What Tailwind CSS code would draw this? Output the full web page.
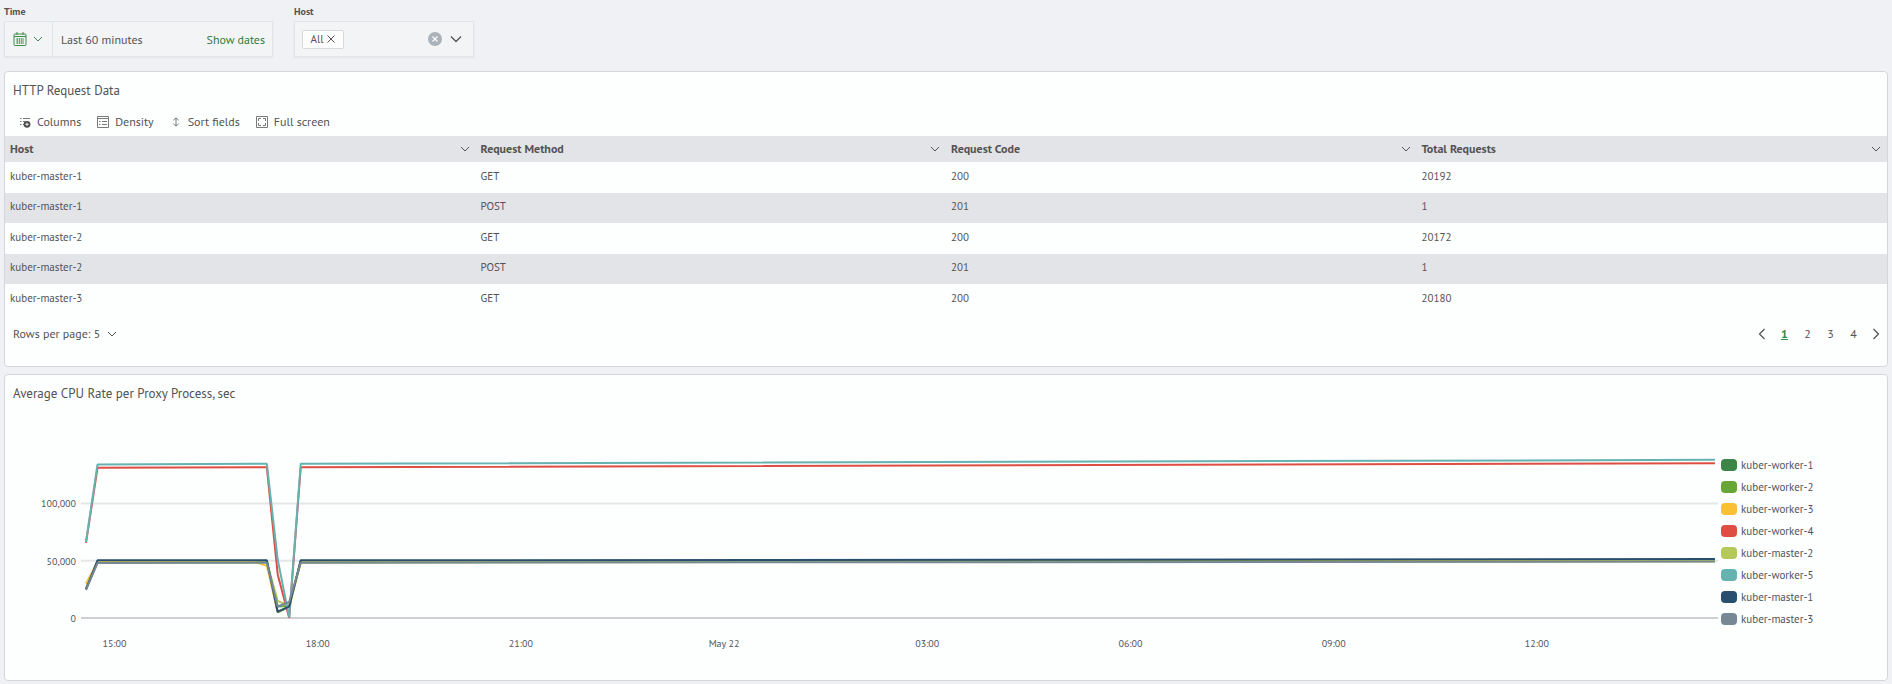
<!DOCTYPE html>
<html lang="en">
<head>
    <meta charset="UTF-8">
    <meta name="viewport" content="width=device-width, initial-scale=1.0">
    <title>HTTP Request Dashboard</title>
    <script src="https://cdn.jsdelivr.net/npm/@tailwindcss/browser@4"></script>
</head>
<body class="min-h-screen bg-[#f0f1f4] px-1 pt-1 font-['PT_Sans','Noto_Sans',sans-serif] text-xs text-[#535353]">
    <svg class="hidden">
        <symbol id="chevron" viewBox="0 0 16 16"><path d="M4 6l4 4 4-4" fill="none" stroke="currentColor"/></symbol>
    </svg>

    <!-- Filters -->
    <div class="flex gap-[21px]">
        <div>
            <div class="h-4 text-[10px] leading-4 font-bold">Time</div>
            <div class="mt-px flex h-9 w-[269px] items-center border border-[#e0e5e8] bg-[#f3f4f6] shadow-xs">
                <button aria-label="Quick time select" class="flex h-full w-12 items-center gap-[2px] border-r border-[#e0e5e8] pl-[7px] text-[#3c8c4c]">
                    <svg class="size-4" viewBox="0 0 16 16" fill="none" stroke="currentColor">
                        <rect x="2" y="3" width="12" height="11.5" rx="1"/>
                        <path d="M2 5.5h12M5 1v3M11 1v3"/>
                        <path d="M4.5 8h7.5M4.5 10h7.5M4.5 12h7.5" stroke-width="1.3" stroke-dasharray="1.5 .8"/>
                    </svg>
                    <svg class="size-4"><use href="#chevron"/></svg>
                </button>
                <button class="flex-1 pt-px pl-2 text-left">Last 60 minutes</button>
                <button class="pt-px pr-[7px] text-[#2f7d3a]">Show dates</button>
            </div>
        </div>
        <div>
            <div class="h-4 text-[10px] leading-4 font-bold">Host</div>
            <div class="mt-px flex h-9 w-[180px] items-center border border-[#e0e5e8] bg-[#f3f4f6] px-[7px] shadow-xs">
                <span class="flex h-[19px] w-[42px] items-center justify-center gap-1 rounded-xs border border-[#d6dade] bg-[#fdfdfe] text-[11px]">
                    All
                    <button aria-label="Remove All"><svg class="size-2" viewBox="0 0 8 8" stroke="currentColor"><path d="m.5.5 7 7m0-7-7 7"/></svg></button>
                </span>
                <button aria-label="Clear" class="ml-auto flex size-[14px] items-center justify-center rounded-full bg-[#abb2b9] text-white">
                    <svg class="size-[6px]" viewBox="0 0 6 6" stroke="currentColor" stroke-width="1.2"><path d="m.5.5 5 5m0-5-5 5"/></svg>
                </button>
                <button aria-label="Open list" class="ml-1"><svg class="size-5"><use href="#chevron"/></svg></button>
            </div>
        </div>
    </div>

    <!-- Requests table -->
    <section class="mt-[14px] h-[296px] rounded-sm border border-[#d3d6db] bg-[#fdfefe]">
        <h2 class="px-2 pt-[10px] text-[13px] leading-[18px]">HTTP Request Data</h2>
        <div class="mt-[9px] mb-px flex h-[26px] items-center gap-4 px-[14px]">
            <button class="flex items-center gap-[6px]">
                <svg class="size-3 text-[#6a6a6a]" viewBox="0 0 12 12" fill="none" stroke="currentColor">
                    <path d="M1 2.5h1.5M1 5.5h1.5M1 8.5h1.5M4 2.5h7M4 5.5h2M4 8.5h1" stroke-width=".9"/>
                    <circle cx="8" cy="8.3" r="3.4" fill="#4a4a4a" stroke="none"/>
                    <path d="M6.3 8.3h3.4M8 6.6v3.4" stroke="#fff" stroke-width=".9"/>
                </svg>
                Columns
            </button>
            <button class="flex items-center gap-[6px]">
                <svg class="size-3 text-[#7a7a7a]" viewBox="0 0 12 12" fill="none" stroke="currentColor">
                    <path d="M.5.5h11v11H.5zM.5 2.5h11"/>
                    <path d="M2 5.5h1.5M5 5.5h5M2 8.5h1.5M5 8.5h5"/>
                </svg>
                Density
            </button>
            <button class="flex items-center gap-[6px]">
                <svg class="size-3 text-[#7a7a7a]" viewBox="0 0 12 12" fill="none" stroke="currentColor"><path d="M6 2v8M3.3 4.2 6 1.9l2.7 2.3M3.3 7.8 6 10.1l2.7-2.3"/></svg>
                Sort fields
            </button>
            <button class="flex items-center gap-[6px]">
                <svg class="size-3 text-[#7a7a7a]" viewBox="0 0 12 12" fill="none" stroke="currentColor">
                    <path d="M.5.5h11v11H.5z"/>
                    <path d="M2.5 5V2.5H5M7 2.5h2.5V5M9.5 7v2.5H7M5 9.5H2.5V7"/>
                </svg>
                Full screen
            </button>
        </div>
        <table class="w-full table-fixed text-left">
            <thead>
                <tr id="head" class="h-[26px] bg-[#e3e4e8]"></tr>
            </thead>
            <tbody id="rows" class="text-[11px]"></tbody>
        </table>
        <div class="flex h-9 items-center justify-between pt-px pl-2">
            <button class="flex items-center gap-1">Rows per page: 5 <svg class="size-4"><use href="#chevron"/></svg></button>
            <nav class="flex items-center">
                <button aria-label="Previous page" class="flex w-[22px] justify-center"><svg class="size-5 rotate-90"><use href="#chevron"/></svg></button>
                <a href="#1" class="w-[23px] text-center font-bold text-[#2f8a45] underline">1</a>
                <a href="#2" class="w-[23px] text-center">2</a>
                <a href="#3" class="w-[23px] text-center">3</a>
                <a href="#4" class="w-[23px] text-center">4</a>
                <button aria-label="Next page" class="flex w-[22px] justify-center"><svg class="size-5 -rotate-90"><use href="#chevron"/></svg></button>
            </nav>
        </div>
    </section>

    <!-- CPU chart -->
    <section class="mt-[7px] h-[307px] rounded-sm border border-[#d3d6db] bg-[#fdfefe]">
        <h2 class="px-2 pt-[10px] text-[13px] leading-[18px]">Average CPU Rate per Proxy Process, sec</h2>
        <div class="flex">
            <svg id="chart" class="h-[260px] min-w-0 flex-1 text-[10px]"></svg>
            <ul id="legend" class="w-[166px] pt-[51px] text-[11px] text-[#4d555c]"></ul>
        </div>
    </section>

    <script>
        const columns = ['Host', 'Request Method', 'Request Code', 'Total Requests'];
        const data = [
            ['kuber-master-1', 'GET', 200, 20192],
            ['kuber-master-1', 'POST', 201, 1],
            ['kuber-master-2', 'GET', 200, 20172],
            ['kuber-master-2', 'POST', 201, 1],
            ['kuber-master-3', 'GET', 200, 20180]
        ];

        document.getElementById('head').innerHTML = columns.map(name => `
            <th scope="col" class="px-[5px] py-0">
                <div class="flex items-center justify-between">${name}
                    <button aria-label="${name} menu" class="-mr-[2px]"><svg class="size-4"><use href="#chevron"/></svg></button>
                </div>
            </th>`).join('');

        document.getElementById('rows').innerHTML = data.map(row => `
            <tr class="h-[31px] even:h-[30px] even:bg-[#e3e4e8]">
                ${row.map(cell => `<td class="px-[5px] pt-0 pb-[3px]">${cell}</td>`).join('')}
            </tr>`).join('');

        // sample times in hours from the left edge of the chart
        const hours = [0, 0.17, 2.5, 2.67, 2.83, 3, 3.17, 24.05];
        const series = [
            { name: 'kuber-worker-1', color: '#3d8547', values: [25500, 49500, 49700, 49700, 5000, 10000, 49700, 50300] },
            { name: 'kuber-worker-2', color: '#67a637', values: [25500, 49200, 49400, 49400, 10000, 10500, 49400, 50000] },
            { name: 'kuber-worker-3', color: '#f9bf35', values: [30000, 48800, 48800, 45500, 5500, 10000, 48700, 49600] },
            { name: 'kuber-worker-4', color: '#de4e43', values: [65500, 131000, 131500, 131500, 38000, 0, 131500, 135000] },
            { name: 'kuber-master-2', color: '#b5c85a', values: [25500, 48500, 48500, 48500, 15000, 10500, 48500, 49500] },
            { name: 'kuber-worker-5', color: '#65b2b1', values: [66500, 134000, 134500, 134500, 51000, 500, 134500, 138000] },
            { name: 'kuber-master-1', color: '#294f70', values: [25000, 50300, 50300, 50300, 5500, 10000, 50300, 51500] },
            { name: 'kuber-master-3', color: '#758894', values: [24500, 48000, 48300, 48300, 10000, 14000, 48300, 49200] }
        ];
        const ticks = ['15:00', '18:00', '21:00', 'May 22', '03:00', '06:00', '09:00', '12:00'];

        document.getElementById('legend').innerHTML = series.map(s => `
            <li class="flex h-[22px] items-center gap-1">
                <span class="h-3 w-4 rounded-sm" style="background:${s.color}"></span>${s.name}
            </li>`).join('');

        const svg = document.getElementById('chart');

        function drawChart() {
            const left = 76, right = svg.clientWidth - 3, base = 215;
            const y = v => base - v * 57.3 / 50000;
            const x = h => left + 5 + h / 24.05 * (right - left - 8);
            let out = '';
            for (const v of [100000, 50000, 0]) {
                out += `<path d="M${left} ${y(v)}H${right}" stroke="${v ? '#e4e6e8' : '#cdd0d3'}" stroke-width="2"/>`;
                out += `<text x="${left - 5}" y="${y(v) + 4}" text-anchor="end" fill="#4d555c">${v.toLocaleString('en-US')}</text>`;
            }
            ticks.forEach((t, i) => {
                out += `<text x="${x(0.42 + i * 3)}" y="${base + 29}" text-anchor="middle" fill="#4d555c">${t}</text>`;
            });
            for (const s of series) {
                const points = s.values.map((v, i) => `${x(hours[i])},${y(v)}`).join(' ');
                out += `<polyline points="${points}" fill="none" stroke="${s.color}" stroke-width="2" stroke-linejoin="bevel"/>`;
            }
            svg.innerHTML = out;
        }

        new ResizeObserver(drawChart).observe(svg);
    </script>
</body>
</html>
